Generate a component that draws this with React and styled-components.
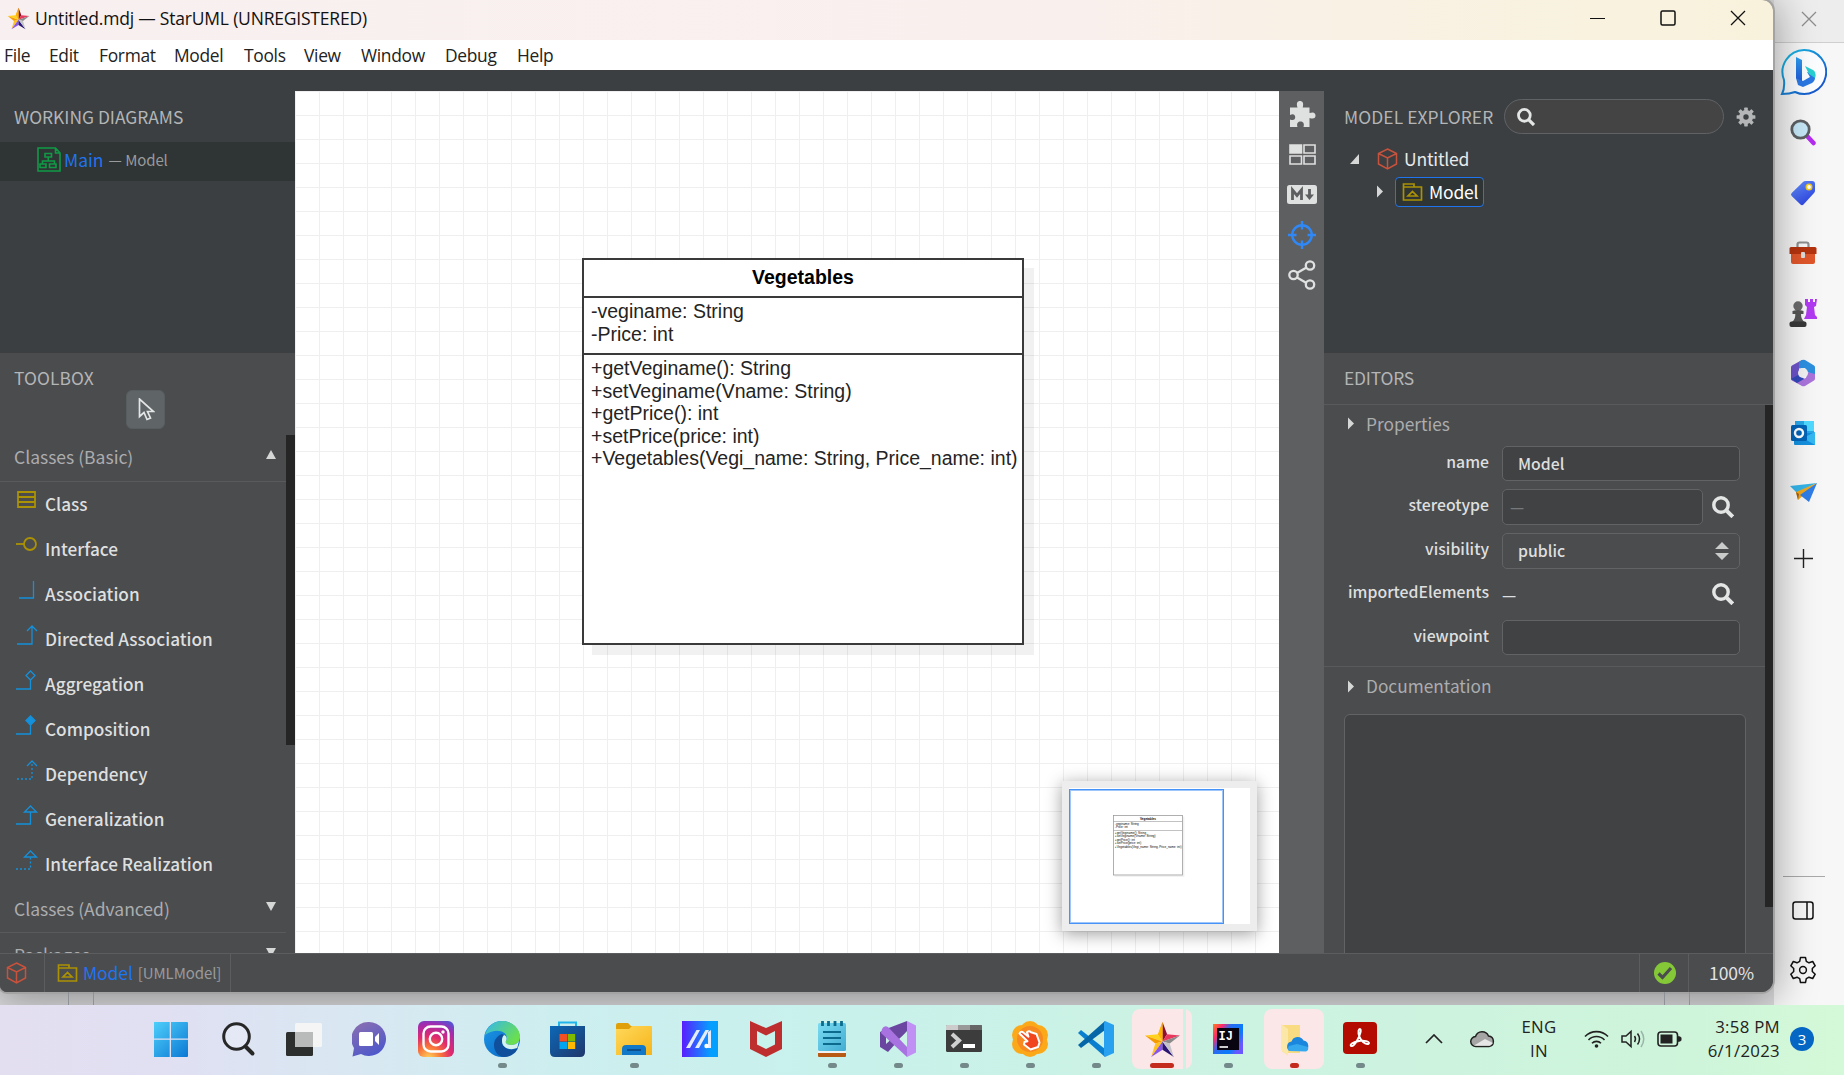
import React from "react";
import styled, { createGlobalStyle, css } from "styled-components";

const appFont = `"Noto Sans CJK SC", "Noto Sans", sans-serif`;
const winFont = `"Open Sans", "Noto Sans", sans-serif`;

const GlobalStyle = createGlobalStyle`
  * { box-sizing: border-box; }
  body { margin: 0; overflow: hidden; }
  svg { display: block; flex: none; }
`;

/* ---------- desktop ---------- */
const Desktop = styled.div`
  width: 1844px;
  height: 1075px;
  display: flex;
  flex-direction: column;
  overflow: hidden;
  font-family: ${appFont};
  background: #f3f3f3;
`;
const Upper = styled.div`
  height: 1005px;
  overflow: hidden;
  display: grid;
  grid-template-columns: 1774px 70px;
`;
const WindowColumn = styled.div`
  display: flex;
  flex-direction: column;
  background: #dcdcde;
  z-index: 1;
  height: 1005px;
`;
const AppWindow = styled.div`
  width: 1773px;
  height: 992px;
  display: flex;
  flex-direction: column;
  border-radius: 0 11px 12px 7px;
  overflow: hidden;
  background: #4b4c4e;
  box-shadow: 0 0 0 2px #a3a3a3, 0 4px 40px 4px rgba(0, 0, 0, 0.36);
`;
const Behind = styled.div`
  flex: 1;
  display: flex;
  justify-content: space-between;
  padding: 0 84px 0 68px;
`;
const Ticks = styled.div`
  width: ${(p) => p.$w}px;
  border: solid #8e9297;
  border-width: 0 1px;
`;

/* ---------- title and menu ---------- */
const TitleBar = styled.div`
  height: 40px;
  display: flex;
  align-items: center;
  padding: 0 27px 4px 7px;
  background: linear-gradient(90deg, #f8eff0 0, #f9f0ee 60%, #f9f1e4 76%, #f8f2df 90%, #f8f2dd 100%);
`;
const Title = styled.div`
  flex: 1;
  margin-left: 5px;
  font: 17.5px/24px ${winFont};
  letter-spacing: -0.2px;
  color: #111;
`;
const WindowButtons = styled.div`
  display: flex;
  gap: 54px;
`;
const MenuBar = styled.div`
  height: 30px;
  display: flex;
  align-items: center;
  padding: 0 4px 1px;
  background: #fff;
`;
const MenuItem = styled.div`
  width: ${(p) => p.$w}px;
  font: 17.4px/24px ${winFont};
  letter-spacing: -0.3px;
  color: #222;
`;

/* ---------- body ---------- */
const Body = styled.div`
  height: 883px;
  padding-top: 21px;
  background: #3b3f41;
  display: grid;
  grid-template-columns: 295px 984px 45px 449px;
`;
const Panel = styled.div`
  height: 862px;
  display: flex;
  flex-direction: column;
  overflow: hidden;
`;
const TopPane = styled.div`
  height: 262px;
  flex: none;
  background: #3b3f41;
`;
const PaneTitle = styled.div`
  font-size: 17.4px;
  line-height: 24px;
  letter-spacing: ${(p) => p.$ls || 0}px;
  color: #b4b5b6;
  white-space: nowrap;
`;
const PaneHeader = styled.div`
  height: 51px;
  display: flex;
  align-items: center;
  padding: 0 17px 0 14px;
`;
const DiagramRow = styled.div`
  height: 39px;
  display: flex;
  align-items: center;
  padding: 0 0 4px 37px;
  background: #2f3434;
`;
const LinkText = styled.span`
  font-size: 17.5px;
  line-height: 24px;
  color: #1f74f0;
  margin-left: ${(p) => p.$ml || 3}px;
`;
const Muted = styled.span`
  font-size: 15px;
  line-height: 24px;
  letter-spacing: -0.1px;
  color: #999a9b;
  margin: 1px 0 0 5px;
`;

/* ---------- toolbox ---------- */
const Toolbox = styled.div`
  flex: 1;
  min-height: 0;
  background: #4b4c4e;
  display: flex;
  flex-direction: column;
`;
const ToolboxHead = styled.div`
  height: 82px;
  flex: none;
  padding: 13px 14px 0;
`;
const PointerButton = styled.div`
  width: 39px;
  height: 39px;
  margin-left: 112px;
  padding-left: 2px;
  border-radius: 6px;
  border: 1px solid #585d60;
  background: #5f6467;
  display: flex;
  align-items: center;
  justify-content: center;
`;
const Scroller = styled.div`
  flex: 1;
  min-height: 0;
  display: flex;
`;
const ScrollBody = styled.div`
  flex: 1;
  overflow: hidden;
`;
const Thumb = styled.div`
  width: ${(p) => p.$w}px;
  height: ${(p) => p.$h}px;
  background: #252525;
`;
const GroupHead = styled.div`
  height: ${(p) => p.$h}px;
  display: flex;
  justify-content: space-between;
  align-items: center;
  padding: 0 10px 2px 14px;
  border-bottom: 1px solid #595a5c;
  font-size: 17.5px;
  line-height: 24px;
  color: #acadae;
  svg { margin-bottom: 4px; }
`;
const ToolRow = styled.div`
  height: 45px;
  display: flex;
  align-items: center;
  padding: 0 0 2px 15px;
  gap: 6px;
  font-size: 17.2px;
  line-height: 24px;
  font-weight: 500;
  color: #dedfdf;
  svg { margin-bottom: 8px; }
`;

/* ---------- canvas ---------- */
const Canvas = styled.div`
  position: relative;
  overflow: hidden;
  background-color: #fff;
  background-image: linear-gradient(#efefef 1px, transparent 1px), linear-gradient(90deg, #efefef 1px, transparent 1px);
  background-size: 24px 24px;
  background-position: 0 0;
`;
const boxShape = css`
  width: 442px;
  height: 387px;
  border: 2px solid #3a3a3a;
  background: #fff;
  box-shadow: 10px 10px 0 rgba(0, 0, 0, 0.055);
  font: 19.5px/22.6px "Liberation Sans", Arial, sans-serif;
  color: #242424;
`;
const ClassShape = styled.div`
  ${boxShape}
  position: absolute;
  left: 287px;
  top: 167px;
`;
const MiniShape = styled.div`
  ${boxShape}
  position: absolute;
  left: 44px;
  top: 27px;
  width: 448px;
  border-width: 5px;
  border-color: #999;
  transform: scale(0.156);
  transform-origin: 0 0;
  color: #000;
`;
const ClassName = styled.div`
  height: 38px;
  line-height: 35px;
  text-align: center;
  font-weight: 700;
  color: #000;
  border-bottom: 2px solid #3a3a3a;
`;
const Compartment = styled.div`
  height: ${(p) => p.$h || "auto"};
  padding: 2px 0 0 7px;
  border-bottom: ${(p) => (p.$line ? "2px solid #3a3a3a" : "0")};
  white-space: nowrap;
`;
const MiniMap = styled.div`
  position: absolute;
  left: 767px;
  top: 690px;
  width: 195px;
  height: 150px;
  padding: 7px;
  background: #ededed;
  box-shadow: 0 3px 16px rgba(0, 0, 0, 0.38);
`;
const MiniPaper = styled.div`
  position: relative;
  height: 136px;
  background: #fff;
`;
const MiniView = styled.div`
  width: 155px;
  height: 135px;
  margin-top: 1px;
  border: 1px solid #4592f8;
  outline: 1px solid #9ec6fb;
  outline-offset: -2px;
  position: absolute;
`;

/* ---------- tool strip ---------- */
const ToolStrip = styled.div`
  background: #5e5f61;
  display: flex;
  flex-direction: column;
  align-items: center;
  padding: 3px 0 0 1px;
`;
const StripSlot = styled.div`
  height: 40.3px;
  display: flex;
  align-items: center;
`;

/* ---------- explorer and editors ---------- */
const ExplorerHead = styled.div`
  height: 51px;
  display: flex;
  align-items: center;
  padding: 0 17px 0 20px;
`;
const ExplorerTitle = styled(PaneTitle)`
  width: 160px;
`;
const SearchPill = styled.div`
  width: 221px;
  height: 35px;
  margin-right: 12px;
  padding-left: 12px;
  border: 1px solid #606366;
  border-radius: 18px;
  background: #444445;
  display: flex;
  align-items: center;
`;
const TreeRow = styled.div`
  height: 33px;
  display: flex;
  align-items: center;
  padding-left: ${(p) => p.$indent}px;
  font-size: 17.5px;
  line-height: 24px;
  letter-spacing: -0.2px;
  color: #e9eaea;
`;
const TreeText = styled.span`
  margin-left: 6px;
`;
const TreeGap = styled.span`
  width: 17px;
`;
const Selected = styled.div`
  width: 89px;
  height: 30px;
  margin-left: 11px;
  padding-left: 6px;
  border: 1px solid #1f74f0;
  border-radius: 4px;
  background: #2f3434;
  color: #fff;
  display: flex;
  align-items: center;
`;
const EditorPane = styled.div`
  flex: 1;
  min-height: 0;
  display: flex;
  flex-direction: column;
  background: #4b4c4e;
`;
const EditorHead = styled.div`
  height: 52px;
  flex: none;
  padding: 13px 20px;
  border-bottom: 1px solid #595a5c;
`;
const SectionHead = styled.div`
  height: ${(p) => p.$h}px;
  padding: 0 0 ${(p) => p.$pb}px 23px;
  display: flex;
  align-items: center;
  gap: 11px;
  font-size: 17.3px;
  line-height: 24px;
  color: #acadae;
`;
const Fields = styled.div`
  display: flex;
  flex-direction: column;
  gap: 8px;
  padding-bottom: 11px;
  border-bottom: 1px solid #595a5c;
`;
const Field = styled.div`
  height: ${(p) => p.$h || 35}px;
  display: grid;
  grid-template-columns: 165px 238px;
  column-gap: 13px;
  font-size: 15.8px;
  line-height: 22px;
  font-weight: 500;
  color: #dedfdf;
`;
const FieldLabel = styled.div`
  text-align: right;
  padding-top: ${(p) => p.$pt || 5}px;
  white-space: nowrap;
`;
const FieldBody = styled.div`
  display: flex;
  align-items: center;
  justify-content: space-between;
`;
const Input = styled.div`
  width: ${(p) => p.$w || 238}px;
  height: 100%;
  padding: 0 10px 0 ${(p) => p.$pl || 15}px;
  border: 1px solid #626365;
  border-radius: 5px;
  background: ${(p) => (p.$plain ? "#4b4c4e" : "#414243")};
  color: ${(p) => (p.$dim ? "#777879" : "#dedfdf")};
  display: flex;
  align-items: center;
  justify-content: space-between;
`;
const LensWrap = styled.div`
  margin: 0 6px ${(p) => p.$mb || 0}px 0;
`;
const DocArea = styled.div`
  width: 402px;
  height: 260px;
  margin-left: 20px;
  border: 1px solid #626365;
  border-radius: 6px;
  background: #414243;
`;

/* ---------- status bar ---------- */
const StatusBar = styled.div`
  height: 39px;
  display: flex;
  border-top: 1px solid #5c5d5f;
  background: #4b4c4e;
`;
const StatusCell = styled.div`
  width: ${(p) => p.$w}px;
  flex: ${(p) => (p.$grow ? 1 : "none")};
  padding: 0 0 1px ${(p) => p.$pl || 0}px;
  display: flex;
  align-items: center;
  justify-content: ${(p) => (p.$center ? "center" : "flex-start")};
  border-right: ${(p) => (p.$last ? 0 : 1)}px solid #5c5d5f;
  font-size: 17.5px;
  line-height: 24px;
  letter-spacing: -0.1px;
  color: #e2e3e3;
`;

/* ---------- browser side bar ---------- */
const SideBar = styled.div`
  display: flex;
  flex-direction: column;
  background: #f7f7f7;
  padding-bottom: 5px;
`;
const SideTop = styled.div`
  height: 43px;
  padding: 11px 0 0 27px;
  border-bottom: 1px solid #cfcfcf;
  background: #ededed;
`;
const SideSlot = styled.div`
  height: ${(p) => p.$h || 60}px;
  padding-right: 12px;
  display: flex;
  align-items: center;
  justify-content: center;
`;
const SideRule = styled.div`
  width: 42px;
  height: 1px;
  margin: auto 0 3px 9px;
  background: #a9a9a9;
`;

/* ---------- taskbar ---------- */
const TaskBar = styled.div`
  height: 70px;
  display: flex;
  justify-content: space-between;
  padding-left: 139px;
  background: linear-gradient(90deg, #e3dff0 0, #e0e0f2 9%, #d8e8f2 20%, #cdeeef 30%, #c8f1ec 45%, #cbf2e4 60%, #cdf3df 78%, #cef5da 92%, #d4f9d8 100%);
  font-family: ${winFont};
`;
const Apps = styled.div`
  display: flex;
`;
const Slot = styled.div`
  width: 66px;
  display: flex;
  flex-direction: column;
  align-items: center;
  padding-top: 4px;
`;
const Tile = styled.div`
  width: 60px;
  height: 60px;
  border-radius: 8px;
  background: ${(p) => (p.$active ? "#fbe6e8" : "transparent")};
  ${(p) => p.$stacked && "background: linear-gradient(90deg, #fbe6e8 51px, #cdf2e4 51px, #cdf2e4 54px, #fbe6e8 54px);"}
  display: flex;
  flex-direction: column;
  align-items: center;
`;
const IconBox = styled.div`
  height: 54px;
  padding-top: 6px;
  display: flex;
  align-items: center;
`;
const Dot = styled.div`
  width: ${(p) => (p.$wide ? 24 : 9)}px;
  height: 5px;
  border-radius: 3px;
  background: ${(p) => p.$color || "#74898a"};
`;
const Tray = styled.div`
  display: flex;
  align-items: center;
  padding: 0 30px 2px 0;
  color: #222;
`;
const TrayIcon = styled.div`
  width: ${(p) => p.$w}px;
  display: flex;
  justify-content: center;
`;
const TrayText = styled.div`
  width: ${(p) => p.$w}px;
  text-align: ${(p) => p.$align || "center"};
  font-size: 16.8px;
  line-height: 24px;
  letter-spacing: ${(p) => p.$ls || 0}px;
`;
const Badge = styled.div`
  width: 24px;
  height: 24px;
  margin-left: 10px;
  border-radius: 50%;
  background: #0666c4;
  color: #fff;
  font-size: 15px;
  line-height: 24px;
  text-align: center;
`;

/* ---------- drawings ---------- */
const Star = ({ size }) => (
  <svg width={size} height={size} viewBox="0 0 36 36">
    <path d="M18 1v18l-4-6z" fill="#f4a300" />
    <path d="M18 1l4.500 12L18 20z" fill="#8d0f33" />
    <path d="M1 14l12.500-1L18 20z" fill="#ffd21e" />
    <path d="M13.500 13L18 1v19z" fill="#ffb400" />
    <path d="M1 14l10 8 7-2z" fill="#f59b00" />
    <path d="M35 14l-12.500-1L18 20z" fill="#e8385e" />
    <path d="M35 14l-10 8-7-2z" fill="#8b8b8b" />
    <path d="M7 35l4-13 7-2z" fill="#ffc21e" />
    <path d="M7 35l11-7v-8z" fill="#8a56e8" />
    <path d="M18 20v8l11 7z" fill="#2b1673" />
    <path d="M29 35l-4-13-7-2z" fill="#c3c3c8" />
  </svg>
);
const Cross = ({ color }) => (
  <svg width="16" height="16" viewBox="0 0 16 16" stroke={color} strokeWidth="1.3"><path d="M1 1l14 14M15 1L1 15" /></svg>
);
const Cube = () => (
  <svg width="21" height="22" viewBox="0 0 21 22" fill="none" stroke="#c9523c" strokeWidth="1.5">
    <path d="M10.500 1l9 4.500v10.500l-9 5-9-5V5.500zM1.500 5.500l9 4.500 9-4.500M10.500 10v11" />
  </svg>
);
const Pack = () => (
  <svg width="21" height="18" viewBox="0 0 20 18" fill="none" stroke="#ab9104" strokeWidth="1.7">
    <path d="M1 4V1h10.500v3M1 4h18v13H1zM5.500 13h9L10 8.500z" />
  </svg>
);
const DiagramIcon = () => (
  <svg width="24" height="25" viewBox="0 0 24 25" fill="none" stroke="#109a45" strokeWidth="1.6">
    <path d="M1 1h17.500l4.500 5v18H1zM18.500 1v5H23M8 6.500h6.500v3.500H8zM11.300 10v3.500M5.500 17v-3h12v3M3 17h6v3.500H3zM12.500 17H19v3.500h-6.500z" />
  </svg>
);
const Lens = ({ size, stroke = 3.4 }) => (
  <svg width={size} height={size} viewBox="0 0 22 22" fill="none" stroke="#e4e5e5">
    <circle cx="9" cy="9" r="7.200" strokeWidth={stroke} />
    <path d="M14.800 14.800l6 6" strokeWidth={stroke + 0.6} />
  </svg>
);
const Tri = ({ dir, size = 10 }) => {
  const d = { up: "M0 9L5 0l5 9z", down: "M0 0h10L5 9z", right: "M1 0l6 6-6 6z", corner: "M9 0v10H0z" }[dir];
  return <svg width={size} height={dir === "right" ? 13 : 10} viewBox={dir === "right" ? "0 0 8 12" : "0 0 10 10"}><path d={d} fill="#d5d6d6" /></svg>;
};
const Cog = ({ size = 20 }) => (
  <svg width={size} height={size} viewBox="0 0 20 20">
    <g fill="#b4b6b7">
      {[0, 45, 90, 135].map((a) => <rect key={a} x="8.200" y="0.600" width="3.600" height="18.800" rx="0.600" transform={`rotate(${a} 10 10)`} />)}
      <circle cx="10" cy="10" r="7" />
    </g>
    <circle cx="10" cy="10" r="2.700" fill="#3b3f41" />
  </svg>
);

const toolShapes = {
  cls: <path stroke="#ab9104" strokeWidth="1.800" d="M3 2h17v15H3zM3 7h17M3 12h17" />,
  iface: <><circle cx="15" cy="9" r="6" stroke="#ab9104" strokeWidth="1.800" /><path d="M1 9h8" stroke="#ab9104" strokeWidth="1.800" /></>,
  assoc: <path d="M4 18h14.500V1" />,
  directed: <path d="M2 19h15V1.500M12 6l5-5 5 5" />,
  aggr: <path d="M1 19h14.500v-9M15.500 1l4.500 4.500-4.500 4.500L11 5.500z" />,
  comp: <><path d="M1 19h14.500v-9" /><path d="M15.500 1l4.500 4.500-4.500 4.500L11 5.500z" fill="#1590da" /></>,
  dep: <><path d="M2 19h15V3" strokeDasharray="2 2" /><path d="M12 6l5-5 5 5" /></>,
  gen: <path d="M1 19h14.500V7M15.500 1l6 6h-12z" />,
  real: <><path d="M1 19h14.500V7" strokeDasharray="2 2" /><path d="M15.500 1l6 6h-12z" /></>,
};
const tools = [
  ["cls", "Class"], ["iface", "Interface"], ["assoc", "Association"], ["directed", "Directed Association"], ["aggr", "Aggregation"],
  ["comp", "Composition"], ["dep", "Dependency"], ["gen", "Generalization"], ["real", "Interface Realization"],
];
const menus = [["File", 45], ["Edit", 50], ["Format", 75], ["Model", 70], ["Tools", 60], ["View", 57], ["Window", 84], ["Debug", 72], ["Help", 50]];

const ClassParts = () => (
  <>
    <ClassName>Vegetables</ClassName>
    <Compartment $h="57px" $line>
      <div>-veginame: String</div>
      <div>-Price: int</div>
    </Compartment>
    <Compartment>
      <div>+getVeginame(): String</div>
      <div>+setVeginame(Vname: String)</div>
      <div>+getPrice(): int</div>
      <div>+setPrice(price: int)</div>
      <div>+Vegetables(Vegi_name: String, Price_name: int)</div>
    </Compartment>
  </>
);

const stripIcons = [
  <svg key="p" width="27" height="28" viewBox="0 0 27 28" fill="#dfe0e0"><path d="M1 7.500h7.500C7 3 8.500 1 11 1s4 2 2.700 6.500h6.800V13c4.500-1.500 6 .3 6 2.500s-1.500 4-6 2.500V27h-6c1.300-4-.8-5.600-3-5.600s-4.200 1.600-3 5.600H1v-7.500c3.800 1.500 5.200-.3 5.200-2.300S4.700 13.300 1 15z" /></svg>,
  <svg key="g" width="27" height="21" viewBox="0 0 27 21" fill="none" stroke="#dfe0e0" strokeWidth="1.600"><path d="M1 1h11.500v8H1z" fill="#dfe0e0" /><path d="M15 1h11v8H15zM1 12h11.500v8H1zM15 12h11v8H15z" /></svg>,
  <svg key="m" width="30" height="19" viewBox="0 0 30 19"><rect width="30" height="19" rx="2.500" fill="#dfe0e0" /><path d="M5.500 15V5l4.500 5.500L14.500 5v10M22.500 4v9" stroke="#5e5f61" strokeWidth="2.800" fill="none" /><path d="M18 9.500h9L22.500 15z" fill="#5e5f61" /></svg>,
  <svg key="c" width="28" height="28" viewBox="0 0 28 28" fill="none" stroke="#2f88f5" strokeWidth="2.400"><circle cx="14" cy="14" r="9.800" /><path d="M14 0v8.500M14 19.500V28M0 14h8.500M19.500 14H28" /></svg>,
  <svg key="s" width="28" height="30" viewBox="0 0 28 30" fill="none" stroke="#dfe0e0" strokeWidth="2.300"><circle cx="5.500" cy="15" r="4.200" /><circle cx="22" cy="5.500" r="4.200" /><circle cx="22" cy="24.500" r="4.200" /><path d="M9 13L18.500 7.500M9 17.500l9.500 5.500" /></svg>,
];

const sideIcons = [
  <svg key="bing" width="47" height="50" viewBox="0 0 47 50"><defs><linearGradient id="bo" x1="0" y1="0" x2="1" y2="1"><stop offset="0" stopColor="#18c3e8" /><stop offset="1" stopColor="#1745c8" /></linearGradient><linearGradient id="bb" x1="0" y1="0" x2="0" y2="1"><stop offset="0" stopColor="#2b9ff0" /><stop offset="1" stopColor="#2258d8" /></linearGradient></defs><path d="M24 2a22 22 0 1 1-9 42c-4 1.500-9 2-13 2 2-4 2.500-9 2-14A22 22 0 0 1 24 2z" fill="#fbfdff" stroke="url(#bo)" strokeWidth="2" /><path d="M16 9l6 3v22l-6-3.500z" fill="url(#bb)" /><path d="M16 30l7 3 7-4-3-5 7 2c2 4 1 7-2 9l-9 4-5-2z" fill="#2a78e4" /><path d="M25 18l8 4c3 2 3 6 2 8l-6-4z" fill="#28cfd2" /></svg>,
  <svg key="find" width="26" height="28" viewBox="0 0 26 28"><path d="M17.500 17.500l6 6.500" stroke="#b52df0" strokeWidth="4.500" strokeLinecap="round" /><circle cx="10.500" cy="10.500" r="8.700" fill="#c6e8f8" stroke="#5d6063" strokeWidth="2.800" /></svg>,
  <svg key="tag" width="26" height="26" viewBox="0 0 26 26"><defs><linearGradient id="tg" x1="0" y1="0" x2="0.700" y2="1"><stop offset="0" stopColor="#6795ff" /><stop offset="1" stopColor="#2b41e0" /></linearGradient></defs><path d="M13 2q1-1 2.500-1L22 1q3 0 3 3v6.500q0 1.500-1 2.500L13.500 24.500q-1.500 1.500-3 0L1.700 16q-1.500-1.500 0-3z" fill="url(#tg)" /><circle cx="19" cy="7" r="2.700" fill="#fff" stroke="#f1ca1b" strokeWidth="1.600" /></svg>,
  <svg key="box" width="28" height="24" viewBox="0 0 28 24"><path d="M8.500 7V3.500q0-2 2-2h7q2 0 2 2V7" stroke="#8e8e8e" strokeWidth="2.200" fill="none" /><rect x="2" y="7" width="24" height="16" rx="2" fill="#e0562a" /><path d="M.5 7.500q0-1.500 1.500-1.500h24q1.500 0 1.500 1.500V13h-27z" fill="#b5330f" /><rect x="12" y="11" width="4" height="6" rx="1" fill="#ddd" /></svg>,
  <svg key="chess" width="28" height="30" viewBox="0 0 28 30"><path d="M16 1h3v3h2V1h3v3h2V1h2l-1 7-2 1 1 8 2 2v2H15l2-4 1-8-2-2z" fill="#b23af2" /><circle cx="9" cy="8" r="4.700" fill="#6a6a6a" /><path d="M3.500 13q5.500-2 11 0v3h-2.500c0 4 1 6 4 8.500H2.500c3-2.500 3.800-4.500 3.800-8.500H3.500z" fill="#555" /><rect x="0.500" y="23.500" width="17" height="5.500" rx="2" fill="#383838" /></svg>,
  <svg key="m365" width="26" height="28" viewBox="0 0 26 28"><path d="M12 1L2 6.500Q1 7 1 8.500v11q0 1.500 1 2l5 2 2-4V9l6-4z" fill="#6c52c8" /><path d="M12 1q1.500-.7 3 0l9 5.500q1 .5 1 2V16l-8-3-2-4-6 .5V3z" fill="#2e8fe0" /><path d="M1 20l2 2 9 5q1 .7 3 0l9-5.500q1-.7 1-2V15l-8-2-1 6-6 2z" fill="#aa74dc" /><path d="M1 20l9-5 4 5-7 4z" fill="#3248b8" /><circle cx="13" cy="14" r="5" fill="#f2f2f2" /></svg>,
  <svg key="outlook" width="26" height="26" viewBox="0 0 26 26"><rect x="5" y="1" width="19" height="17" fill="#28a8ea" /><path d="M14 1h10v10H14z" fill="#50d9ff" /><path d="M4 13l20 0 1-1v13H5q-1 0-1-1z" fill="#1490df" /><path d="M25 12v13L13 18z" fill="#35b8f1" /><rect x="1" y="5" width="16" height="16" rx="1.500" fill="#0364b8" /><circle cx="9" cy="13" r="4" fill="none" stroke="#fff" strokeWidth="2.400" /></svg>,
  <svg key="plane" width="27" height="20" viewBox="0 0 27 20"><path d="M0 3L27 0 7 10z" fill="#35b4e8" /><path d="M27 0L6 9l2 8z" fill="#f2a81d" /><path d="M6 9l3 2-1 6z" fill="#a85e0c" /><path d="M27 0L10 12l9 7z" fill="#2f7de8" /></svg>,
];

const grad = (id, a, b, x2 = 1, y2 = 1) => <linearGradient id={id} x1="0" y1="0" x2={x2} y2={y2}><stop offset="0" stopColor={a} /><stop offset="1" stopColor={b} /></linearGradient>;
const I = ({ children }) => <svg width="36" height="36" viewBox="0 0 36 36">{children}</svg>;

const apps = [
  { icon: <I><defs>{grad("w1", "#4fd0fb", "#0b78d4")}</defs><g fill="url(#w1)" transform="translate(-1 0)"><path d="M0 2q0-1 1-1h15.700v16.500H0zM18 1H34q1 0 1 1v15.500H18zM0 18.700h16.700V36H1q-1 0-1-1zM18 18.700H35V35q0 1-1 1H18z" /></g></I> },
  { icon: <I><circle cx="16.500" cy="15.500" r="12.800" fill="#f0f2fa" fillOpacity="0.400" stroke="#272727" strokeWidth="3" /><path d="M25.500 25.500l7 7" stroke="#272727" strokeWidth="4" strokeLinecap="round" /></I> },
  { icon: <I><rect x="0" y="11" width="27" height="24" rx="1.500" fill="#2d2e2e" /><rect x="9" y="2" width="27" height="24" rx="1.500" fill="#f5f5f5" /><path d="M9 11h18v15H9z" fill="#b9baba" /></I> },
  { icon: <I><defs>{grad("ch", "#8e70b0", "#5059c9", 0.5, 1)}</defs><path d="M17 1a17 17 0 1 1-8 32l-8.500 2.500L2 27A17 17 0 0 1 17 1z" fill="url(#ch)" /><rect x="7" y="11" width="14" height="14" rx="1.500" fill="#fff" /><path d="M23 16l4-4v12l-4-4z" fill="#fff" /></I> },
  { icon: <I><defs><radialGradient id="ig" cx="0.300" cy="1.050" r="1.150"><stop offset="0" stopColor="#ffd75e" /><stop offset="0.300" stopColor="#f8743a" /><stop offset="0.550" stopColor="#e02a6e" /><stop offset="0.850" stopColor="#a02cb0" /><stop offset="1" stopColor="#5b50d0" /></radialGradient></defs><rect width="36" height="36" rx="6" fill="url(#ig)" /><g fill="none" stroke="#fff" strokeWidth="2.400"><rect x="5.500" y="5.500" width="25" height="25" rx="7" /><circle cx="18" cy="18" r="6.200" /></g><circle cx="25" cy="11" r="1.700" fill="#fff" /></I> },
  { icon: <I><defs>{grad("e1", "#35b6f0", "#6be04c", 1, 0.6)}{grad("e2", "#1d9be8", "#0860c0")}</defs><circle cx="18" cy="18" r="18" fill="url(#e2)" /><path d="M1 14C4 4 11 0 18 0c10 0 18 7 18 16 0 5-4 8-9 8-4 0-6-2-5-4 4-8-8-15-21-6z" fill="url(#e1)" /><path d="M18 13c-5 2-8 6-8 11 0 7 5 12 10 12 7 0 12-4 14-9-8 4-16 0-16-7 0-2 1-5 4-5z" fill="#104f9b" /><path d="M20 14c3 1 3 4 2 6s1 4 5 4c3 0 6-1 8-4-1 3-1 5-2 7-7 3-15 0-15-7 0-2 0-4 2-6z" fill="#d5f2ef" /></I>, dot: 1 },
  { icon: <I><defs>{grad("st", "#0c68b8", "#20376a")}</defs><g transform="translate(-1 0)"><path d="M10 7V1.500h17V7" stroke="#20b5ec" strokeWidth="2" fill="none" /><path d="M1 5h35v26q0 5-5 5H6q-5 0-5-5z" fill="url(#st)" /><path d="M10.500 13h7.500v7.500h-7.500z" fill="#f25022" /><path d="M18.700 13h7.500v7.500h-7.500z" fill="#7fba00" /><path d="M10.500 21h7.500v7h-7.500z" fill="#00a4ef" /><path d="M18.700 21h7.500v7h-7.500z" fill="#ffb900" /></g></I> },
  { icon: <I><defs>{grad("fx", "#ffd85b", "#f6b51a")}</defs><path d="M0 4q0-2 2-2h10l3 3h19l2 2v4H0z" fill="#dfa00a" /><path d="M0 8h13l3-3h19q1 0 1 1v28H0z" fill="url(#fx)" /><path d="M6 34V28q0-4 4-4h16q4 0 4 4v6z" fill="#1278c8" /><path d="M11 29h14" stroke="#0b4f8e" strokeWidth="2" /></I>, dot: 1 },
  { icon: <I><defs>{grad("ma", "#5a1dff", "#05a0ff", 0.8, 0)}</defs><rect width="36" height="36" fill="url(#ma)" /><path d="M4 27h4L18 9h-3.500zM13 27h4L27 9h-3.500zM26 11l3-2v18h-3z" fill="#e4ecff" /><circle cx="24.500" cy="25" r="2.200" fill="#fff" /></I> },
  { icon: <I><path d="M2 0l16 7 16-7v28l-16 8-16-8z" fill="#be2e2e" /><path d="M9 10l9 4.500 9-4.500v13.500L18 28l-9-4.500z" fill="#c8f2ec" /></I> },
  { icon: <I><defs>{grad("np", "#7adcf2", "#43acd2")}</defs><rect x="4" y="30" width="28" height="6" rx="1" fill="#b85a14" /><rect x="4" y="29" width="28" height="3" fill="#f2f2f2" /><rect x="4" y="2" width="28" height="28" rx="1.500" fill="url(#np)" /><g stroke="#0c6a8c" strokeWidth="2"><path d="M9 11h18M9 17h18M9 23h18" /><path d="M8.500 0v5M14.500 0v5M21 0v5M27.500 0v5" strokeWidth="2.800" /></g></I>, dot: 1 },
  { icon: <I><path d="M0 11l6-3 21-8v10L8 31l-8-5z" fill="#6b46a0" /><path d="M6 14v9l5-4.500z" fill="#cdf3e8" /><path d="M27 0l9 4.500v27L27 36z" fill="#c090f5" /><path d="M27 11v14l-8-7z" fill="#cdf3e8" /><path d="M2 8q2-4 6-2l19 20v10L1 12z" fill="#a873e0" /></I>, dot: 1 },
  { icon: <I><rect x="0" y="4" width="36" height="27" rx="1.500" fill="#3c3c3c" /><path d="M0 5q0-1 1-1h11v5H0z" fill="#ccc" /><path d="M12 4h12v5H12z" fill="#999" /><path d="M24 4h11q1 0 1 1v4H24z" fill="#666" /><path d="M6 13l7 6.500L6 26" stroke="#d0d0d0" strokeWidth="4" fill="none" /><path d="M17 25h12" stroke="#fff" strokeWidth="4" /></I>, dot: 1 },
  { icon: <I><g fill="#fba919"><circle cx="18" cy="10" r="10" /><circle cx="10" cy="14" r="10" /><circle cx="26" cy="14" r="10" /><circle cx="10" cy="23" r="10" /><circle cx="26" cy="23" r="10" /><circle cx="18" cy="26" r="10" /></g><circle cx="18" cy="18" r="13" fill="#f78a20" /><path d="M7.500 12.500q1.500-3 4-.8l5 4-1.500-4.500q2-2 4 0l5.500 1.800 3 8.500-1.500 4.500-7.500 2.500-6.500-5 .5-2.500 3-.8z" fill="#f0451d" stroke="#fff" strokeWidth="2" strokeLinejoin="round" /></I>, dot: 1 },
  { icon: <I><path d="M0 12l3-3 24 19v8L0 12z" fill="#0a7fd0" /><path d="M0 24l3 3L27 9V0z" fill="#0566a8" /><path d="M27 0l9 4v28l-9 4-1-2V2z" fill="#28a2f0" /></I>, dot: 1 },
  { icon: <Star size={37} />, active: 1, stacked: 1 },
  { icon: <I><defs><linearGradient id="ij" x1="0" y1="0" x2="1" y2="0.600"><stop offset="0" stopColor="#fc801d" /><stop offset="0.250" stopColor="#fe2a6c" /><stop offset="0.450" stopColor="#2a6bf0" /><stop offset="0.800" stopColor="#087cfa" /><stop offset="1" stopColor="#6b57ff" /></linearGradient></defs><rect x="3" y="3" width="30" height="30" fill="url(#ij)" /><rect x="7" y="7" width="22" height="22" fill="#080410" /><text x="8.500" y="18.500" fill="#fff" fontFamily="Liberation Mono, monospace" fontWeight="700" fontSize="12">IJ</text><path d="M9.500 26h8.500" stroke="#fff" strokeWidth="1.600" /></I>, dot: 1 },
  { icon: <I><path d="M6 4h18v28H8l-2-2z" fill="#f9dc82" /><path d="M5 3l7 5v27l-6-5q-1-1-1-2z" fill="#fbe7a8" /><path d="M14 30a5 5 0 0 1 1.500-9.500 6.500 6.500 0 0 1 12-1A5.500 5.500 0 0 1 29 30z" fill="#1b86de" /><path d="M13 30q-2-3 0-5l8-2 11 3q1 3-2 4.500z" fill="#36a8ee" /></I>, active: 1, dot: 1, red: 1 },
  { icon: <I><rect x="1" y="1" width="34" height="32" rx="4" fill="#b30b00" /><path d="M9 25c-1.500-1.500 2-4 8-5s10 .5 10 2-3 1.500-6-1-5-8-4.500-11 3-2.500 2 1.500-6 15-9.500 13.500z" fill="none" stroke="#fff" strokeWidth="1.900" /></I>, dot: 1 },
];

export default function App() {
  return (
    <Desktop>
      <GlobalStyle />
      <Upper>
        <WindowColumn>
          <AppWindow>
            <TitleBar>
              <Star size={23} />
              <Title>Untitled.mdj — StarUML (UNREGISTERED)</Title>
              <WindowButtons>
                <svg width="16" height="16" stroke="#111" strokeWidth="1.200"><path d="M0 8.500h15" /></svg>
                <svg width="16" height="16" fill="none" stroke="#111" strokeWidth="1.500"><rect x="1" y="1" width="14" height="14" rx="1.500" /></svg>
                <Cross color="#111" />
              </WindowButtons>
            </TitleBar>
            <MenuBar>{menus.map(([m, w]) => <MenuItem key={m} $w={w}>{m}</MenuItem>)}</MenuBar>
            <Body>
              <Panel>
                <TopPane>
                  <PaneHeader><PaneTitle>WORKING DIAGRAMS</PaneTitle></PaneHeader>
                  <DiagramRow><DiagramIcon /><LinkText>Main</LinkText><Muted>— Model</Muted></DiagramRow>
                </TopPane>
                <Toolbox>
                  <ToolboxHead>
                    <PaneTitle $ls={0.1}>TOOLBOX</PaneTitle>
                    <PointerButton>
                      <svg width="17" height="24" viewBox="0 0 17 24" fill="none" stroke="#e4e5e5" strokeWidth="1.700"><path d="M1.500 1v17.500l4.500-4 3 7 3.500-1.500-3-6.500h6z" /></svg>
                    </PointerButton>
                  </ToolboxHead>
                  <Scroller>
                    <ScrollBody>
                      <GroupHead $h={47}>Classes (Basic)<Tri dir="up" /></GroupHead>
                      {tools.map(([k, label]) => (
                        <ToolRow key={k}>
                          <svg width="24" height="20" viewBox="0 0 24 20" fill="none" stroke="#1590da" strokeWidth="1.300">{toolShapes[k]}</svg>
                          {label}
                        </ToolRow>
                      ))}
                      <GroupHead $h={46}>Classes (Advanced)<Tri dir="down" /></GroupHead>
                      <GroupHead $h={46}>Packages<Tri dir="down" /></GroupHead>
                    </ScrollBody>
                    <Thumb $w={9} $h={310} />
                  </Scroller>
                </Toolbox>
              </Panel>
              <Canvas>
                <ClassShape><ClassParts /></ClassShape>
                <MiniMap>
                  <MiniPaper>
                    <MiniView />
                    <MiniShape><ClassParts /></MiniShape>
                  </MiniPaper>
                </MiniMap>
              </Canvas>
              <ToolStrip>{stripIcons.map((ic, i) => <StripSlot key={i}>{ic}</StripSlot>)}</ToolStrip>
              <Panel>
                <TopPane>
                  <ExplorerHead>
                    <ExplorerTitle $ls={0.1}>MODEL EXPLORER</ExplorerTitle>
                    <SearchPill><Lens size={18} /></SearchPill>
                    <Cog />
                  </ExplorerHead>
                  <TreeRow $indent={26}><Tri dir="corner" /><TreeGap /><Cube /><TreeText>Untitled</TreeText></TreeRow>
                  <TreeRow $indent={52}><Tri dir="right" size={8} /><Selected><Pack /><TreeText>Model</TreeText></Selected></TreeRow>
                </TopPane>
                <EditorPane>
                  <EditorHead><PaneTitle $ls={-0.2}>EDITORS</PaneTitle></EditorHead>
                  <Scroller>
                    <ScrollBody>
                      <SectionHead $h={41} $pb={4}><Tri dir="right" size={8} />Properties</SectionHead>
                      <Fields>
                        <Field><FieldLabel>name</FieldLabel><FieldBody><Input>Model</Input></FieldBody></Field>
                        <Field $h={36}><FieldLabel>stereotype</FieldLabel><FieldBody><Input $w={201} $pl={7} $dim>—</Input><LensWrap><Lens size={22} /></LensWrap></FieldBody></Field>
                        <Field $h={36}>
                          <FieldLabel>visibility</FieldLabel>
                          <FieldBody>
                            <Input $plain>public<svg width="14" height="18" viewBox="0 0 14 18" fill="#c9caca"><path d="M0 7l7-7 7 7zM0 11h14l-7 7z" /></svg></Input>
                          </FieldBody>
                        </Field>
                        <Field><FieldLabel $pt={4}>importedElements</FieldLabel><FieldBody>—<LensWrap $mb={2}><Lens size={22} /></LensWrap></FieldBody></Field>
                        <Field><FieldLabel>viewpoint</FieldLabel><FieldBody><Input /></FieldBody></Field>
                      </Fields>
                      <SectionHead $h={47} $pb={9}><Tri dir="right" size={8} />Documentation</SectionHead>
                      <DocArea />
                    </ScrollBody>
                    <Thumb $w={8} $h={502} />
                  </Scroller>
                </EditorPane>
              </Panel>
            </Body>
            <StatusBar>
              <StatusCell $w={45} $pl={6}><Cube /></StatusCell>
              <StatusCell $w={186} $pl={12}><Pack /><LinkText $ml={5}>Model</LinkText><Muted>[UMLModel]</Muted></StatusCell>
              <StatusCell $grow />
              <StatusCell $w={49} $pl={2} $center>
                <svg width="22" height="22" viewBox="0 0 22 22"><circle cx="11" cy="11" r="11" fill="#84c838" /><path d="M4.500 11.500l4 4 8.500-9.500" fill="none" stroke="#4b4c4e" strokeWidth="3.200" /></svg>
              </StatusCell>
              <StatusCell $w={84} $pl={1} $center $last>100%</StatusCell>
            </StatusBar>
          </AppWindow>
          <Behind><Ticks $w={26} /><Ticks $w={26} /></Behind>
        </WindowColumn>
        <SideBar>
          <SideTop><Cross color="#8d8d8d" /></SideTop>
          {sideIcons.map((ic, i) => <SideSlot key={i}>{ic}</SideSlot>)}
          <SideSlot $h={70}><svg width="19" height="19" stroke="#222" strokeWidth="1.400"><path d="M9.500 0v19M0 9.500h19" /></svg></SideSlot>
          <SideRule />
          <SideSlot><svg width="22" height="19" fill="none" stroke="#111" strokeWidth="1.500"><rect x="1" y="1" width="20" height="17" rx="2.500" /><path d="M15 1v17" /></svg></SideSlot>
          <SideSlot>
            <svg width="26" height="28" viewBox="0 0 26 28" fill="none" stroke="#111" strokeWidth="1.500" strokeLinejoin="round">
              <path d="M10.500 1.500h5l.8 3.800 2.700 1.500 3.700-1.300 2.500 4.300L22.300 12.500v3l2.900 2.700-2.500 4.300-3.700-1.300-2.700 1.500-.8 3.800h-5l-.8-3.800L7 21.200l-3.700 1.300L.8 18.200l2.900-2.700v-3L.8 9.800l2.500-4.300L7 6.800l2.700-1.500z" />
              <circle cx="13" cy="14" r="3.400" />
            </svg>
          </SideSlot>
        </SideBar>
      </Upper>
      <TaskBar>
        <Apps>
          {apps.map((a, i) => (
            <Slot key={i}>
              <Tile $active={a.active} $stacked={a.stacked}>
                <IconBox>{a.icon}</IconBox>
                {a.stacked && <Dot $wide $color="#c42b1c" />}
                {a.dot && <Dot $color={a.red ? "#c42b1c" : undefined} />}
              </Tile>
            </Slot>
          ))}
        </Apps>
        <Tray>
          <TrayIcon $w={30}><svg width="18" height="10" fill="none" stroke="#222" strokeWidth="1.700"><path d="M1 9l8-8 8 8" /></svg></TrayIcon>
          <TrayIcon $w={66}><svg width="25" height="18" viewBox="0 0 25 18"><path d="M6 16.500a5 5 0 0 1-.5-10 7 7 0 0 1 13-.5A5.300 5.300 0 0 1 19 16.500z" fill="#a5a5a5" stroke="#222" strokeWidth="1.500" /><path d="M4 15.500L15 9l8 4-3 2.700H6z" fill="#e6e6e6" /></svg></TrayIcon>
          <TrayText $w={48} $ls={0.3}>ENG<br />IN</TrayText>
          <TrayIcon $w={66}>
            <svg width="25" height="18" viewBox="0 0 25 18" fill="none" stroke="#222" strokeWidth="1.600"><path d="M1 6.500a16 16 0 0 1 23 0M4.500 10a11 11 0 0 1 16 0M8 13.300a6.300 6.300 0 0 1 9 0" /><circle cx="12.500" cy="16" r="1.800" fill="#222" stroke="none" /></svg>
          </TrayIcon>
          <TrayIcon $w={8}>
            <svg width="25" height="20" viewBox="0 0 25 20" fill="none" stroke="#222" strokeWidth="1.500"><path d="M1 7v6h4l5 4.500v-15L5 7zM13.500 7q2 3 0 6M16.500 4.500q4 5.500 0 11" /><path d="M20 2q5.500 8 0 16" stroke="#9bb5ab" /></svg>
          </TrayIcon>
          <TrayIcon $w={64}>
            <svg width="25" height="16" viewBox="0 0 25 16"><rect x="1" y="1" width="19.500" height="14" rx="3" fill="none" stroke="#222" strokeWidth="1.600" /><rect x="3.500" y="3.500" width="12" height="9" fill="#222" /><path d="M21.500 5.500l2.500 1v3l-2.500 1z" fill="#222" stroke="#222" /></svg>
          </TrayIcon>
          <TrayText $w={79} $align="right" $ls={0.3}>3:58 PM<br />6/1/2023</TrayText>
          <Badge>3</Badge>
        </Tray>
      </TaskBar>
    </Desktop>
  );
}
